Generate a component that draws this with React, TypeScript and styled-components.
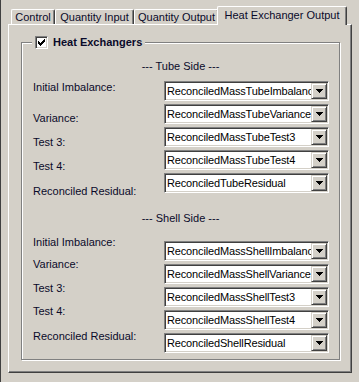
import styled, { createGlobalStyle } from 'styled-components';

const GlobalStyle = createGlobalStyle`
  html, body {
    margin: 0;
    padding: 0;
    background: #d4d0c8;
  }
  body {
    font-family: "Liberation Sans", Arial, sans-serif;
    font-size: 11px;
    color: #000;
  }
`;

type Field = [string, string, number];

const tubeFields: Field[] = [
  ['Initial Imbalance:', 'ReconciledMassTubeImbalance', 0],
  ['Variance:', 'ReconciledMassTubeVariance', 8],
  ['Test 3:', 'ReconciledMassTubeTest3', 9],
  ['Test 4:', 'ReconciledMassTubeTest4', 10],
  ['Reconciled Residual:', 'ReconciledTubeResidual', 12],
];

const shellFields: Field[] = [
  ['Initial Imbalance:', 'ReconciledMassShellImbalance', -5],
  ['Variance:', 'ReconciledMassShellVariance', -6],
  ['Test 3:', 'ReconciledMassShellTest3', -5],
  ['Test 4:', 'ReconciledMassShellTest4', -5],
  ['Reconciled Residual:', 'ReconciledShellResidual', -3],
];

const tabs = [
  { label: 'Control', width: 44 },
  { label: 'Quantity Input', width: 79 },
  { label: 'Quantity Output', width: 85 },
  { label: 'Heat Exchanger Output', width: 130, active: true },
];

function CheckMark() {
  return (
    <svg width="7" height="7" viewBox="0 0 7 7" shapeRendering="crispEdges">
      <path
        fill="#000"
        d="M6 0h1v1h-1z M5 1h2v1h-2z M0 2h1v1h-1z M4 2h3v1h-3z M0 3h2v1h-2z M3 3h3v1h-3z M0 4h5v1h-5z M1 5h3v1h-3z M2 6h1v1h-1z"
      />
    </svg>
  );
}

function DownArrow() {
  return (
    <svg width="7" height="4" viewBox="0 0 7 4" shapeRendering="crispEdges">
      <path fill="#000" d="M0 0h7v1h-1v1h-1v1h-1v1h-1v-1h-1v-1h-1v-1h-1z" />
    </svg>
  );
}

interface SectionProps {
  title: string;
  fields: Field[];
  gap: number;
  rowsGap: number;
}

function Section({ title, fields, gap, rowsGap }: SectionProps) {
  return (
    <SectionBox $gap={gap}>
      <SectionTitle>{title}</SectionTitle>
      <Rows $gap={rowsGap}>
        {fields.map(([label, value, dy]) => (
          <Row key={label}>
            <Label $dy={dy}>{label}</Label>
            <Combo>
              <ComboText>{value}</ComboText>
              <ComboButton>
                <DownArrow />
              </ComboButton>
            </Combo>
          </Row>
        ))}
      </Rows>
    </SectionBox>
  );
}

export default function App() {
  return (
    <>
      <GlobalStyle />
      <Window>
        <TabStrip>
          {tabs.map((t) => (
            <Tab key={t.label} $width={t.width} $active={!!t.active}>
              {t.label}
            </Tab>
          ))}
        </TabStrip>
        <Panel>
          <Group>
            <Legend>
              <CheckBox>
                <CheckMark />
              </CheckBox>
              <LegendText>Heat Exchangers</LegendText>
            </Legend>
            <Section title="--- Tube Side ---" fields={tubeFields} gap={17} rowsGap={8} />
            <Section title="--- Shell Side ---" fields={shellFields} gap={19} rowsGap={16} />
          </Group>
        </Panel>
      </Window>
    </>
  );
}

const Window = styled.div`
  box-sizing: border-box;
  width: 359px;
  height: 382px;
  border-left: 1px solid #404040;
  padding: 6px 0 0 7px;
`;

const TabStrip = styled.div`
  display: flex;
  align-items: flex-end;
  height: 18px;
  padding-left: 3px;
`;

const Tab = styled.div<{ $width: number; $active: boolean }>`
  box-sizing: border-box;
  width: ${(p) => p.$width}px;
  height: ${(p) => (p.$active ? 19 : 15)}px;
  margin: ${(p) => (p.$active ? '0 0 -1px -2px' : '0')};
  padding-top: ${(p) => (p.$active ? 2 : 1)}px;
  position: relative;
  z-index: ${(p) => (p.$active ? 2 : 0)};
  background: #d4d0c8;
  border-top: 1px solid #fff;
  border-left: 1px solid #fff;
  border-right: 1px solid #404040;
  border-radius: 2px 2px 0 0;
  box-shadow: inset -1px 0 0 #808080;
  line-height: 13px;
  text-align: center;
  white-space: nowrap;
  color: #0a0a2a;
`;

const Panel = styled.div`
  position: relative;
  z-index: 1;
  box-sizing: border-box;
  width: 344px;
  height: 349px;
  border-top: 1px solid #fff;
  border-left: 1px solid #fff;
  border-right: 1px solid #404040;
  border-bottom: 1px solid #404040;
  box-shadow: inset -1px -1px 0 #808080;
  padding: 17px 0 0 12px;
`;

const Group = styled.div`
  position: relative;
  box-sizing: border-box;
  width: 319px;
  height: 318px;
  border: 1px solid #808080;
  box-shadow: 1px 1px 0 #fff, inset 1px 1px 0 #fff;
`;

const Legend = styled.div`
  position: absolute;
  top: -7px;
  left: 10px;
  display: flex;
  align-items: center;
  gap: 5px;
  height: 13px;
  padding: 0 3px;
  background: #d4d0c8;
`;

const CheckBox = styled.div`
  box-sizing: border-box;
  width: 13px;
  height: 13px;
  display: flex;
  align-items: center;
  justify-content: center;
  background: #fff;
  border-top: 1px solid #808080;
  border-left: 1px solid #808080;
  border-right: 1px solid #fff;
  border-bottom: 1px solid #fff;
  box-shadow: inset 1px 1px 0 #404040, inset -1px -1px 0 #d4d0c8;
`;

const LegendText = styled.span`
  font-weight: bold;
  line-height: 13px;
  color: #0a0a2a;
`;

const SectionBox = styled.div<{ $gap: number }>`
  margin-top: ${(p) => p.$gap}px;
`;

const SectionTitle = styled.div`
  height: 13px;
  line-height: 13px;
  text-align: center;
  color: #0a0a2a;
`;

const Rows = styled.div<{ $gap: number }>`
  display: flex;
  flex-direction: column;
  gap: 3px;
  margin-top: ${(p) => p.$gap}px;
`;

const Row = styled.div`
  display: flex;
  align-items: flex-start;
  height: 20px;
  padding-left: 11px;
`;

const Label = styled.div<{ $dy: number }>`
  width: 131px;
  margin-top: ${(p) => p.$dy}px;
  line-height: 13px;
  white-space: nowrap;
  color: #0a0a2a;
`;

const Combo = styled.div`
  box-sizing: border-box;
  display: flex;
  width: 165px;
  height: 20px;
  background: #fff;
  border-top: 1px solid #808080;
  border-left: 1px solid #808080;
  border-right: 1px solid #fff;
  border-bottom: 1px solid #fff;
  box-shadow: inset 1px 1px 0 #404040, inset -1px -1px 0 #d4d0c8;
  padding: 1px;
`;

const ComboText = styled.div`
  flex: 1;
  overflow: hidden;
  white-space: nowrap;
  padding-left: 1px;
  line-height: 16px;
  letter-spacing: -0.15px;
`;

const ComboButton = styled.div`
  box-sizing: border-box;
  flex: 0 0 16px;
  height: 16px;
  display: flex;
  align-items: center;
  justify-content: center;
  background: #d4d0c8;
  border-right: 1px solid #404040;
  border-bottom: 1px solid #404040;
  border-top: 1px solid #d4d0c8;
  border-left: 1px solid #d4d0c8;
  box-shadow: inset 1px 1px 0 #fff, inset -1px -1px 0 #808080;
`;
